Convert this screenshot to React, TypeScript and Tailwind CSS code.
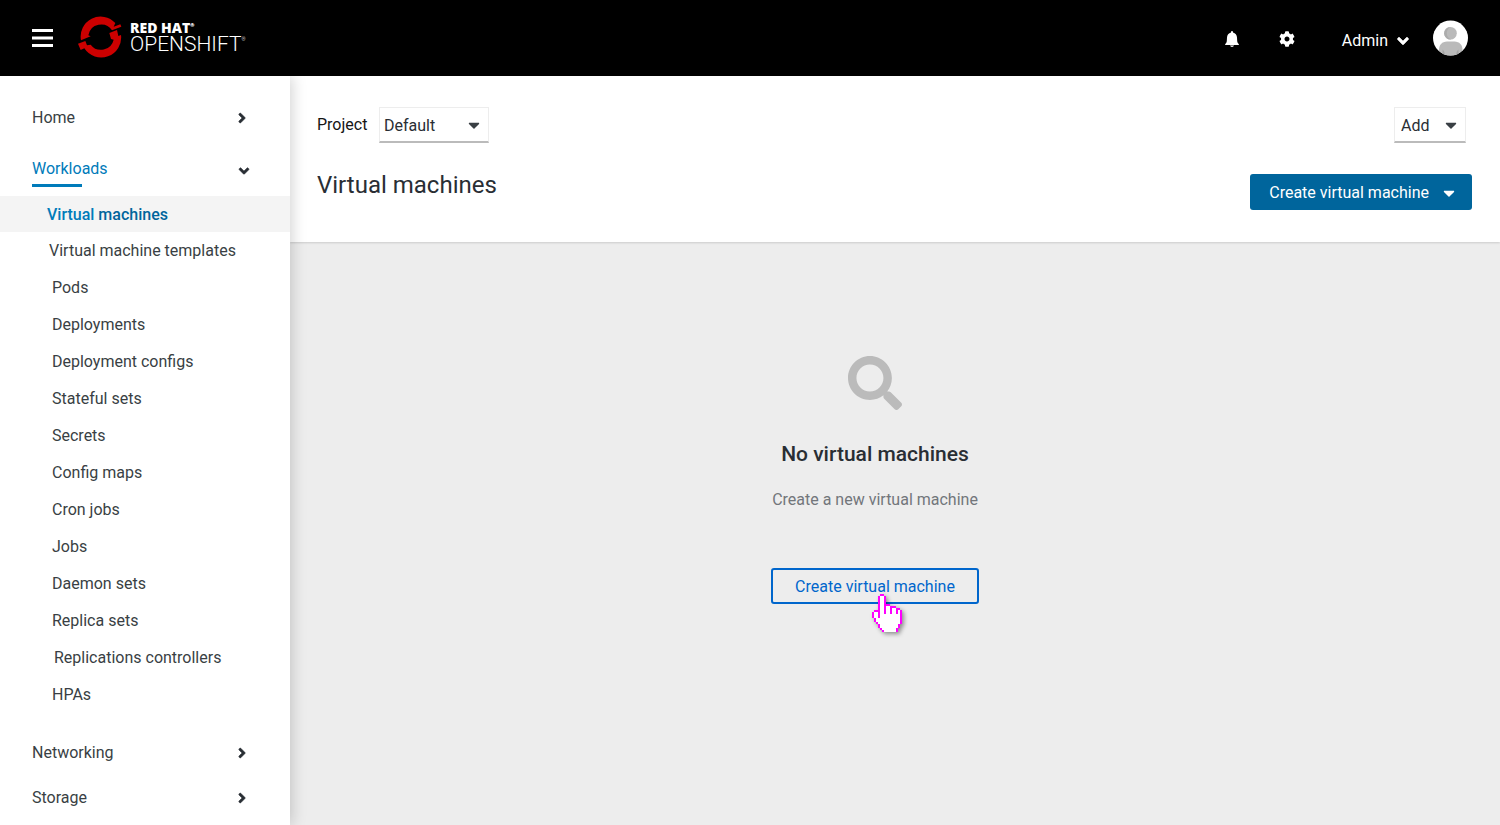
import React from "react";
import { FaAngleDown, FaAngleRight, FaCaretDown, FaCog, FaSearch } from "react-icons/fa";

const workloads = [
  { label: "Virtual machine templates", indent: "pl-[49px]" },
  { label: "Pods", indent: "pl-[52px]" },
  { label: "Deployments", indent: "pl-[52px]" },
  { label: "Deployment configs", indent: "pl-[52px]" },
  { label: "Stateful sets", indent: "pl-[52px]" },
  { label: "Secrets", indent: "pl-[52px]" },
  { label: "Config maps", indent: "pl-[52px]" },
  { label: "Cron jobs", indent: "pl-[52px]" },
  { label: "Jobs", indent: "pl-[52px]" },
  { label: "Daemon sets", indent: "pl-[52px]" },
  { label: "Replica sets", indent: "pl-[52px]" },
  { label: "Replications controllers", indent: "pl-[54px]" },
  { label: "HPAs", indent: "pl-[52px]" },
];

const handRows = [
  "    ##         ",
  "   #..#        ",
  "   #..#        ",
  "   #..#        ",
  "   #..#        ",
  "   #..###      ",
  "   #..#..###   ",
  "   #..#..#..## ",
  " ###..#..#..#.#",
  "#..#..#..#..#.#",
  "#..#..........#",
  "#..#..........#",
  " #............#",
  " #............#",
  "  #...........#",
  "   #.........# ",
  "   #.........# ",
  "    #.......#  ",
  "     #......#  ",
];

function HandPointer() {
  return (
    <svg
      viewBox="0 0 15 19"
      shapeRendering="crispEdges"
      aria-hidden="true"
      className="pointer-events-none absolute top-[26px] left-[101px] h-[38px] w-[30px] drop-shadow-[2px_2px_2px_rgba(0,0,0,0.4)]"
    >
      {handRows.flatMap((row, y) =>
        row.split("").map((cell, x) =>
          cell === " " ? null : (
            <rect key={`${x}-${y}`} x={x} y={y} width="1" height="1" fill={cell === "#" ? "#ff00ff" : "#ffffff"} />
          ),
        ),
      )}
    </svg>
  );
}

function OpenShiftRing() {
  return (
    <svg viewBox="231 48 135 126" className="h-[42px] w-[45px]" fill="#cc0000" aria-hidden="true">
      <path d="M243 121A60 60 0 0 1 346 69L341 80L361 73L364 80L336 91A39 39 0 0 0 265 106L272 109Z" />
      <path d="M328 99L351 90L355 108L363 105A60 60 0 0 1 253 145L242 150L234 131L256 123L261 136L272 134A39 39 0 0 0 341 119L333 117Z" />
    </svg>
  );
}

function Bell() {
  return (
    <svg viewBox="0 0 14 16" className="h-4 w-3.5" fill="currentColor" aria-hidden="true">
      <path d="M6 1a1 1 0 0 1 2 0v.6c2.400.5 3.900 2.400 4 4.900l.2 3.500c.1 1.500.7 2.200 1.600 3.100.3.400.2.900-.4.900H.6c-.6 0-.7-.5-.4-.9.9-.9 1.500-1.600 1.600-3.100L2 6.500c.1-2.500 1.600-4.400 4-4.900zM5 14.600h4c-.2.900-1 1.400-2 1.400s-1.800-.5-2-1.400z" />
    </svg>
  );
}

function Avatar() {
  return (
    <svg viewBox="0 0 36 36" className="size-9" aria-hidden="true">
      <defs>
        <clipPath id="avatar-clip">
          <circle cx="18.500" cy="18" r="17.500" />
        </clipPath>
      </defs>
      <circle cx="18.500" cy="18" r="17.500" fill="#fff" />
      <g clipPath="url(#avatar-clip)">
        <path d="M7 36v-6c0-5 3-8.500 8-8.500h7.500c5 0 8 3.500 8 8.500v6z" fill="#bababa" />
        <path d="M10.500 29.500c2 1.500 2.500 3.500 2 6.500h-2zM26.500 29.500c-2 1.500-2.500 3.500-2 6.500h2z" fill="#a3a3a3" />
        <circle cx="18.500" cy="13.300" r="6.300" fill="#bababa" />
        <path d="M18.500 7a6.300 6.300 0 1 0 1 12.500c-5-1-7-9-1-12.500z" fill="#acacac" />
      </g>
    </svg>
  );
}

function NavGroup({ label, className = "" }: { label: string; className?: string }) {
  return (
    <button type="button" className={`flex h-11 w-full items-center justify-between pr-10 pl-8 text-left ${className}`}>
      {label}
      <FaAngleRight className="size-4 stroke-[#292e34] stroke-[16] text-[#292e34]" />
    </button>
  );
}

function Picker({ id, label, value, className, inset }: { id: string; label?: string; value: string; className: string; inset: string }) {
  return (
    <div className={`grid h-9 items-center ${className}`}>
      <select
        id={id}
        aria-label={label}
        className={`col-start-1 row-start-1 h-9 w-full appearance-none border border-b-2 border-[#ededed] border-b-[#bbbbbb] bg-white pt-0.5 text-[#292e34] ${inset}`}
      >
        <option>{value}</option>
      </select>
      <FaCaretDown className="pointer-events-none col-start-1 row-start-1 mr-1.5 size-[18px] justify-self-end text-[#393f44]" />
    </div>
  );
}

export default function App() {
  return (
    <div className="flex min-h-screen flex-col font-['Roboto',sans-serif] text-base leading-6">
      <header className="flex h-[76px] items-center bg-black pr-8 pl-8 text-white">
        <button type="button" aria-label="Toggle navigation">
          <svg viewBox="0 0 21 18" className="h-[18px] w-[21px]" fill="currentColor">
            <path d="M0 0h21v3H0zM0 7.500h21v3H0zM0 15h21v3H0z" />
          </svg>
        </button>
        <a href="#home" className="ml-6 flex items-center gap-2 pb-0.5">
          <OpenShiftRing />
          <span className="flex flex-col">
            <span className="flex font-['Open_Sans',sans-serif] text-[14px] leading-[14px] font-extrabold">
              RED HAT<span className="text-[5px] leading-[8px]">®</span>
            </span>
            <span className="flex text-[21px] leading-[18px] font-light">
              OPENSHIFT<span className="text-[5px] leading-[8px]">®</span>
            </span>
          </span>
        </a>
        <div className="ml-auto flex items-center">
          <button type="button" aria-label="Notifications" className="pt-0.5">
            <Bell />
          </button>
          <button type="button" aria-label="Settings" className="ml-10 pt-0.5">
            <FaCog className="size-4" />
          </button>
          <button type="button" className="ml-[47px] flex items-center gap-1.5 pt-1.5">
            Admin
            <FaAngleDown className="size-[18px] stroke-white stroke-[16]" />
          </button>
          <button type="button" aria-label="Account" className="ml-5">
            <Avatar />
          </button>
        </div>
      </header>

      <div className="flex grow">
        <nav className="z-10 w-[290px] shrink-0 bg-white pt-5 text-[#393f44] shadow-[2px_0_14px_rgba(0,0,0,0.18)] [clip-path:inset(0_-24px_0_0)]">
          <NavGroup label="Home" />
          <button
            type="button"
            className="mt-1.5 flex h-[46px] w-full items-start justify-between pt-[11px] pr-[38px] pl-8 text-left text-[#007bba]"
          >
            <span className="flex flex-col">
              Workloads
              <span className="mt-[3px] h-[3px] w-[50px] bg-[#007bba]" />
            </span>
            <FaAngleDown className="mt-1.5 size-4 stroke-[#292e34] stroke-[16] text-[#292e34]" />
          </button>
          <ul className="mt-1">
            <li>
              <a
                href="#vms"
                aria-current="page"
                className="flex h-9 items-center bg-[#f4f4f4] pt-0.5 pl-[47px] font-medium text-[#00659c]"
              >
                <span>
                  <span className="text-[#007bba]">Virtual</span> machines
                </span>
              </a>
            </li>
            {workloads.map(({ label, indent }) => (
              <li key={label}>
                <a href="#workload" className={`flex h-[37px] items-center ${indent}`}>
                  {label}
                </a>
              </li>
            ))}
          </ul>
          <NavGroup label="Networking" className="mt-[18px]" />
          <NavGroup label="Storage" className="mt-px" />
        </nav>

        <main className="flex min-w-0 grow flex-col bg-[#ededed]">
          <div className="bg-white pt-[31px] pr-7 pb-8 pl-[27px] shadow-[0_1px_2px_rgba(0,0,0,0.14)]">
            <div className="flex items-center">
              <label htmlFor="project" className="w-[62px] text-[#151515]">
                Project
              </label>
              <Picker id="project" value="Default" className="w-[110px]" inset="pl-1" />
              <Picker id="add" label="Add" value="Add" className="mr-1.5 ml-auto w-[72px]" inset="pl-1.5" />
            </div>
            <div className="mt-[31px] flex items-start justify-between">
              <h1 className="text-2xl leading-[22px] text-[#292e34]">Virtual machines</h1>
              <button
                type="button"
                className="flex h-9 items-center gap-[11px] rounded-[3px] bg-[#00659c] pt-0.5 pr-3.5 pl-[19px] text-white"
              >
                Create virtual machine
                <FaCaretDown className="size-[18px]" />
              </button>
            </div>
          </div>

          <section className="flex flex-col items-center pt-[114px] pr-10">
            <FaSearch className="size-[54px] text-[#bbbbbb]" />
            <h2 className="mt-7 text-[21px] leading-8 font-medium text-[#292e34]">No virtual machines</h2>
            <p className="mt-[18px] text-[#72767b]">Create a new virtual machine</p>
            <div className="relative mt-14">
              <button type="button" className="h-9 w-52 rounded-[3px] border-2 border-[#0066cc] pt-0.5 text-[#0066cc]">
                Create virtual machine
              </button>
              <HandPointer />
            </div>
          </section>
        </main>
      </div>
    </div>
  );
}
